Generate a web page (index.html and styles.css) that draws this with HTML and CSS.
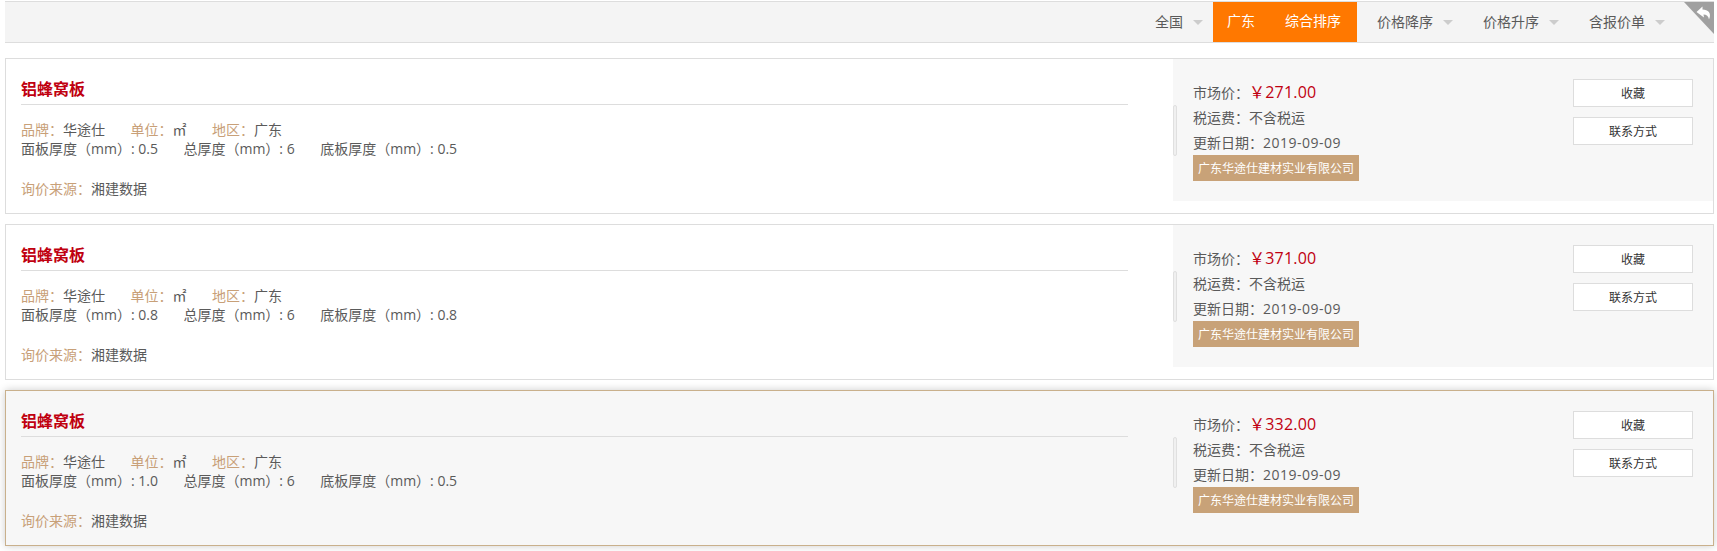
FILE: index.html
```
<!DOCTYPE html>
<html lang="zh-CN">
<head>
    <meta charset="UTF-8">
    <title>铝蜂窝板</title>
    <link rel="stylesheet" href="styles.css">
</head>
<body>
    <!-- Sort bar -->
    <div class="sort-bar">
        <a class="sort-item sort-all">全国<i class="caret"></i></a>
        <div class="sort-active">
            <a>广东</a>
            <a>综合排序</a>
        </div>
        <a class="sort-item">价格降序<i class="caret"></i></a>
        <a class="sort-item">价格升序<i class="caret"></i></a>
        <a class="sort-item">含报价单<i class="caret"></i></a>
        <svg class="back" width="30" height="32" viewBox="0 0 30 32">
            <path d="M0 0H30V32Z" fill="#a0a0a0"/>
            <path d="M12.500 10L18.500 4.500V7.500C24 7.500 28 11 25 17.500C24.500 14 22.500 12.500 19.500 12.500L20 15.500Z" fill="#fff"/>
        </svg>
    </div>

    <!-- Results -->
    <div class="card">
        <div class="info">
            <h3>铝蜂窝板</h3>
            <div class="row">
                <span><em>品牌：</em>华途仕</span>
                <span><em>单位：</em>㎡</span>
                <span><em>地区：</em>广东</span>
            </div>
            <div class="row">
                <span>面板厚度（mm）: 0.5</span>
                <span>总厚度（mm）: 6</span>
                <span>底板厚度（mm）: 0.5</span>
            </div>
            <div class="row source"><span><em>询价来源：</em>湘建数据</span></div>
        </div>
        <div class="side">
            <i class="handle"></i>
            <div class="price-info">
                <p>市场价：<b class="price">￥271.00</b></p>
                <p>税运费：不含税运</p>
                <p>更新日期：<span class="date">2019-09-09</span></p>
                <a class="company">广东华途仕建材实业有限公司</a>
            </div>
            <div class="buttons">
                <a class="btn">收藏</a>
                <a class="btn">联系方式</a>
            </div>
        </div>
    </div>

    <div class="card">
        <div class="info">
            <h3>铝蜂窝板</h3>
            <div class="row">
                <span><em>品牌：</em>华途仕</span>
                <span><em>单位：</em>㎡</span>
                <span><em>地区：</em>广东</span>
            </div>
            <div class="row">
                <span>面板厚度（mm）: 0.8</span>
                <span>总厚度（mm）: 6</span>
                <span>底板厚度（mm）: 0.8</span>
            </div>
            <div class="row source"><span><em>询价来源：</em>湘建数据</span></div>
        </div>
        <div class="side">
            <i class="handle"></i>
            <div class="price-info">
                <p>市场价：<b class="price">￥371.00</b></p>
                <p>税运费：不含税运</p>
                <p>更新日期：<span class="date">2019-09-09</span></p>
                <a class="company">广东华途仕建材实业有限公司</a>
            </div>
            <div class="buttons">
                <a class="btn">收藏</a>
                <a class="btn">联系方式</a>
            </div>
        </div>
    </div>

    <div class="card active">
        <div class="info">
            <h3>铝蜂窝板</h3>
            <div class="row">
                <span><em>品牌：</em>华途仕</span>
                <span><em>单位：</em>㎡</span>
                <span><em>地区：</em>广东</span>
            </div>
            <div class="row">
                <span>面板厚度（mm）: 1.0</span>
                <span>总厚度（mm）: 6</span>
                <span>底板厚度（mm）: 0.5</span>
            </div>
            <div class="row source"><span><em>询价来源：</em>湘建数据</span></div>
        </div>
        <div class="side">
            <i class="handle"></i>
            <div class="price-info">
                <p>市场价：<b class="price">￥332.00</b></p>
                <p>税运费：不含税运</p>
                <p>更新日期：<span class="date">2019-09-09</span></p>
                <a class="company">广东华途仕建材实业有限公司</a>
            </div>
            <div class="buttons">
                <a class="btn">收藏</a>
                <a class="btn">联系方式</a>
            </div>
        </div>
    </div>
</body>
</html>
```

FILE: styles.css
```
* {
    box-sizing: border-box;
}
body {
    margin: 0;
    padding: 1px 3px 0 5px;
    height: 551px;
    overflow: hidden;
    background: #fff;
    font: 14px/19px "Open Sans", "Noto Sans CJK SC", sans-serif;
    color: #5a5a5a;
}
h3, p {
    margin: 0;
}
em, i {
    font-style: normal;
}

/* Sort bar */
.sort-bar {
    position: relative;
    display: flex;
    justify-content: flex-end;
    height: 42px;
    margin-bottom: 15px;
    padding-right: 49px;
    background: #f4f4f4;
    border-top: 1px solid #ddd;
    border-bottom: 1px solid #ddd;
    line-height: 37px;
}
.sort-item {
    display: flex;
    height: 38px;
    align-items: center;
    margin-left: 30px;
}
.sort-all {
    margin-right: 10px;
}
.caret {
    margin: 2px 0 0 10px;
    border: 5px solid transparent;
    border-top-color: #ccc;
    border-bottom: 0;
}
.sort-active {
    display: flex;
    gap: 30px;
    height: 40px;
    margin-right: -10px;
    padding: 0 16px 0 14px;
    background: #ff7800;
    color: #fff;
}
.back {
    position: absolute;
    top: 0;
    right: 0;
}

/* Cards */
.card {
    display: flex;
    justify-content: space-between;
    height: 156px;
    margin-bottom: 10px;
    border: 1px solid #ddd;
}
.card.active {
    background: #f7f7f7;
    border-color: #c9b08c;
    box-shadow: 0 0 8px rgba(0, 0, 0, 0.2);
}
.info {
    width: 1122px;
    padding: 17px 0 0 15px;
}
.info h3 {
    height: 29px;
    margin-bottom: 15px;
    border-bottom: 1px solid #ddd;
    font-size: 16px;
    line-height: 27px;
    color: #c00010;
}
.row {
    display: flex;
    gap: 25.5px;
}
.row em {
    color: #c8a078;
}
.source {
    margin-top: 21px;
}

/* Price side */
.side {
    display: flex;
    position: relative;
    width: 540px;
    height: 142px;
    padding: 20px 20px 0;
    justify-content: space-between;
    background: #f7f7f7;
}
.handle {
    position: absolute;
    left: 0;
    top: 46px;
    width: 4px;
    height: 51px;
    background: #f0f0f0;
    border: 1px solid #e0e0e0;
    border-radius: 2px;
}
.price-info p {
    height: 25px;
    line-height: 28px;
}
.price-info p:first-child {
    line-height: 26px;
}
.price {
    font-size: 16px;
    font-weight: normal;
    letter-spacing: 0.2px;
    color: #c00010;
}
.date {
    letter-spacing: 0.5px;
}
.company {
    display: block;
    height: 26px;
    margin-top: 1px;
    padding: 0 5px;
    background: #c8a278;
    font-size: 12px;
    line-height: 27px;
    color: #fff;
}
.btn {
    display: block;
    width: 120px;
    height: 28px;
    margin-bottom: 10px;
    background: #fff;
    border: 1px solid #ddd;
    font-size: 12px;
    line-height: 27px;
    text-align: center;
    color: #333;
}
```
